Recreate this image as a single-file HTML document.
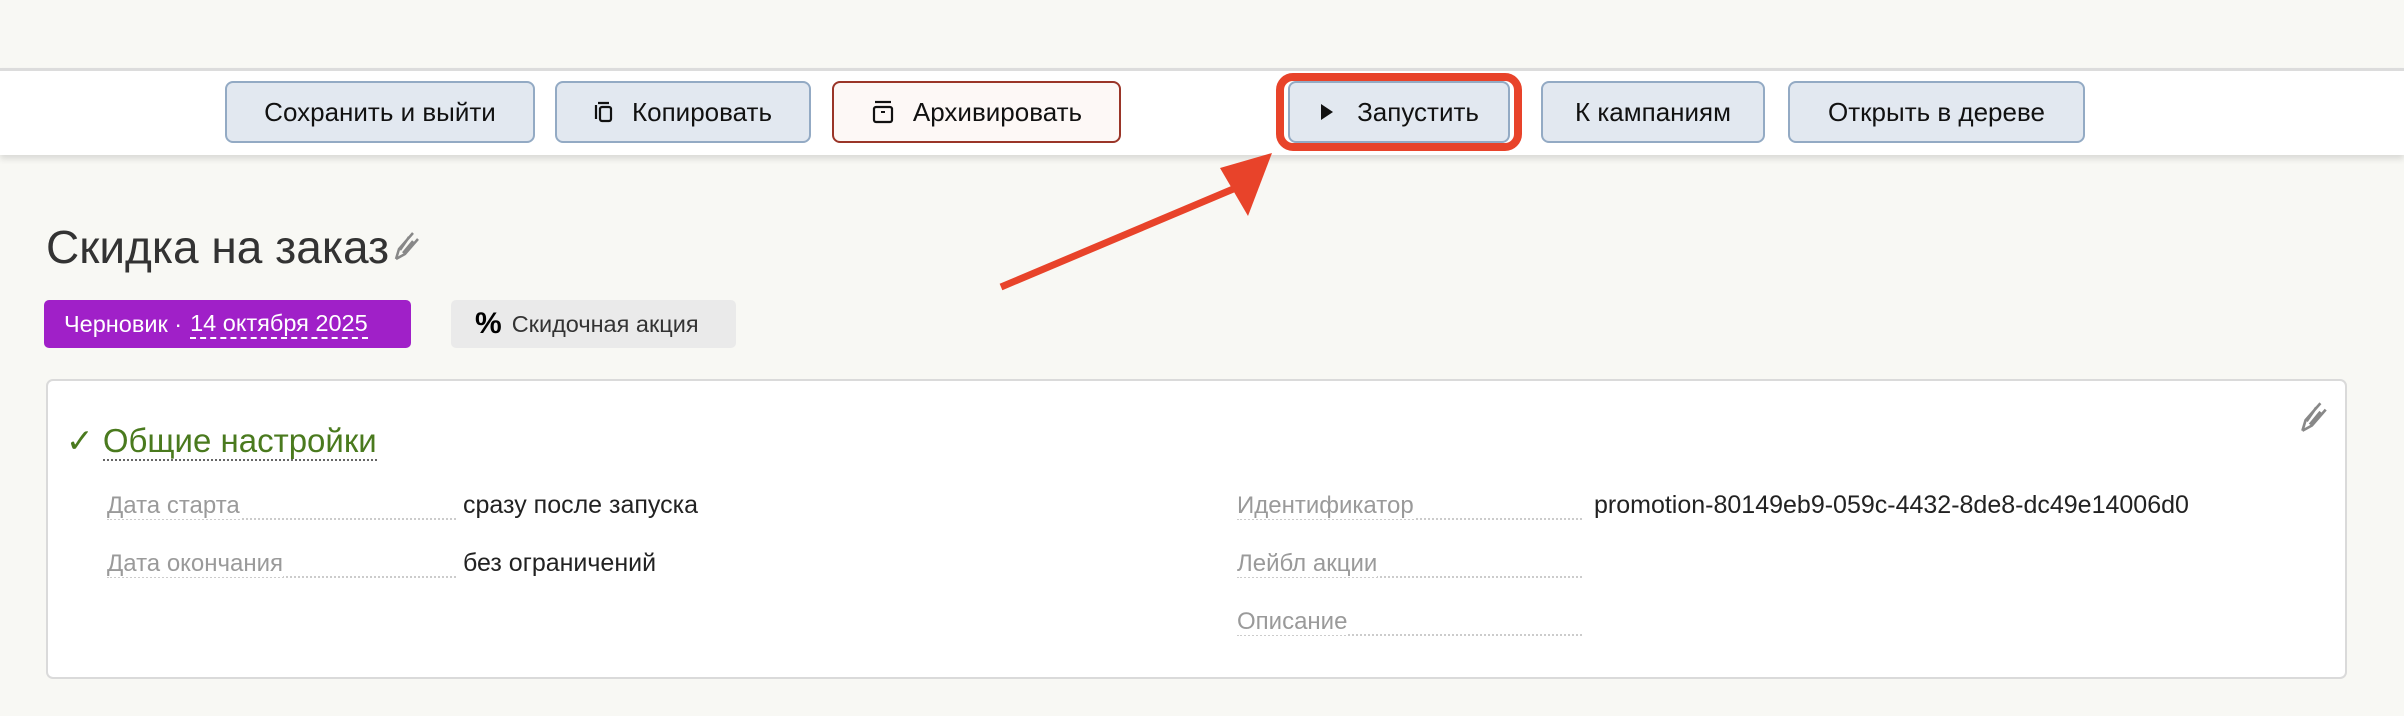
<!DOCTYPE html>
<html><head><meta charset="utf-8"><style>
*{box-sizing:border-box;margin:0;padding:0}
body{width:2404px;height:716px;background:#f8f8f4;font-family:"Liberation Sans",sans-serif;position:relative;overflow:hidden;color:#222}
.bar{position:absolute;left:0;top:68px;width:2404px;height:87px;background:#fff;border-top:3px solid #dcdcdc;box-shadow:0 4px 6px rgba(0,0,0,.12)}
.btn{position:absolute;top:81px;height:62px;border:2px solid #93aac4;background:#e2e8f0;border-radius:8px;font-size:26px;display:flex;align-items:center;justify-content:center;color:#111}
.arch{border-color:#9a3528;background:#fdf8f6}
.ring{position:absolute;left:1276px;top:73px;width:246px;height:78px;border:8px solid #e8432a;border-radius:17px}
.title{position:absolute;left:46px;top:220px;font-size:46px;color:#333}
.badge{position:absolute;top:300px;height:48px;border-radius:5px;display:flex;align-items:center;font-size:23.5px}
.card{position:absolute;left:46px;top:379px;width:2301px;height:300px;background:#fff;border:2px solid #dadada;border-radius:7px}
.lbl{position:absolute;font-size:24px;color:#9a9a9a;border-bottom:2px dotted #ccc;height:27px;line-height:25px}
.lbl span{background:#fff}
.val{position:absolute;font-size:25px;color:#222;line-height:25px}
</style></head><body>
<div class="bar"></div>
<div class="btn" style="left:225px;width:310px">Сохранить и выйти</div>
<div class="btn" style="left:555px;width:256px"><svg width="22" height="24" viewBox="0 0 22 24" style="margin-right:16px"><path d="M4 3H15M2 5V19" stroke="#111" stroke-width="2.2" fill="none"/><rect x="6" y="7" width="11" height="14" rx="2" stroke="#111" stroke-width="2.2" fill="none"/></svg>Копировать</div>
<div class="btn arch" style="left:832px;width:289px"><svg width="24" height="26" viewBox="0 0 24 26" style="margin-right:18px"><path d="M4 3H20" stroke="#111" stroke-width="2.2"/><rect x="3" y="8" width="18" height="15" rx="2" stroke="#111" stroke-width="2.2" fill="none"/><path d="M10 13H14" stroke="#111" stroke-width="2"/></svg>Архивировать</div>
<div class="btn" style="left:1288px;width:222px"><svg width="16" height="20" viewBox="0 0 16 20" style="margin-right:22px"><path d="M2 2L14 10L2 18Z" fill="#111"/></svg>Запустить</div>
<div class="ring"></div>
<div class="btn" style="left:1541px;width:224px">К кампаниям</div>
<div class="btn" style="left:1788px;width:297px">Открыть в дереве</div>
<svg style="position:absolute;left:0;top:0" width="2404" height="716"><path d="M1001 287L1238 187" stroke="#e8432a" stroke-width="7"/><path d="M1272 153L1220 168L1248 216Z" fill="#e8432a"/></svg>
<div class="title">Скидка на заказ<svg width="30" height="34" viewBox="0 0 30 34" style="margin-left:2px"><path d="M5 30L8 20L22 4M5 30L14 25L27 10M9 21L18 8M12 24L22 12" stroke="#888" stroke-width="2.5" fill="none"/></svg></div>
<div class="badge" style="left:44px;width:367px;background:#a020c8;color:#fff;padding-left:20px">Черновик · <span style="border-bottom:2px dashed #fff;margin-left:8px">14 октября 2025</span></div>
<div class="badge" style="left:451px;width:285px;background:#eaeaea;color:#333;padding-left:24px"><b style="font-size:30px;color:#000;margin-right:10px">%</b>Скидочная акция</div>
<div class="card">
<svg style="position:absolute;left:2248px;top:18px" width="34" height="36" viewBox="0 0 30 34"><path d="M5 30L8 20L22 4M5 30L14 25L27 10M9 21L18 8M12 24L22 12" stroke="#888" stroke-width="2.5" fill="none"/></svg>
<div style="position:absolute;left:18px;top:40px;font-size:33px;color:#4a7a1e">✓ <span style="border-bottom:2px dotted #666">Общие настройки</span></div>
<div class="lbl" style="left:59px;top:112px;width:349px"><span>Дата старта</span></div><div class="val" style="left:415px;top:112px">сразу после запуска</div>
<div class="lbl" style="left:59px;top:170px;width:349px"><span>Дата окончания</span></div><div class="val" style="left:415px;top:170px">без ограничений</div>
<div class="lbl" style="left:1189px;top:112px;width:345px"><span>Идентификатор</span></div><div class="val" style="left:1546px;top:112px">promotion-80149eb9-059c-4432-8de8-dc49e14006d0</div>
<div class="lbl" style="left:1189px;top:170px;width:345px"><span>Лейбл акции</span></div>
<div class="lbl" style="left:1189px;top:228px;width:345px"><span>Описание</span></div>
</div>
</body></html>
